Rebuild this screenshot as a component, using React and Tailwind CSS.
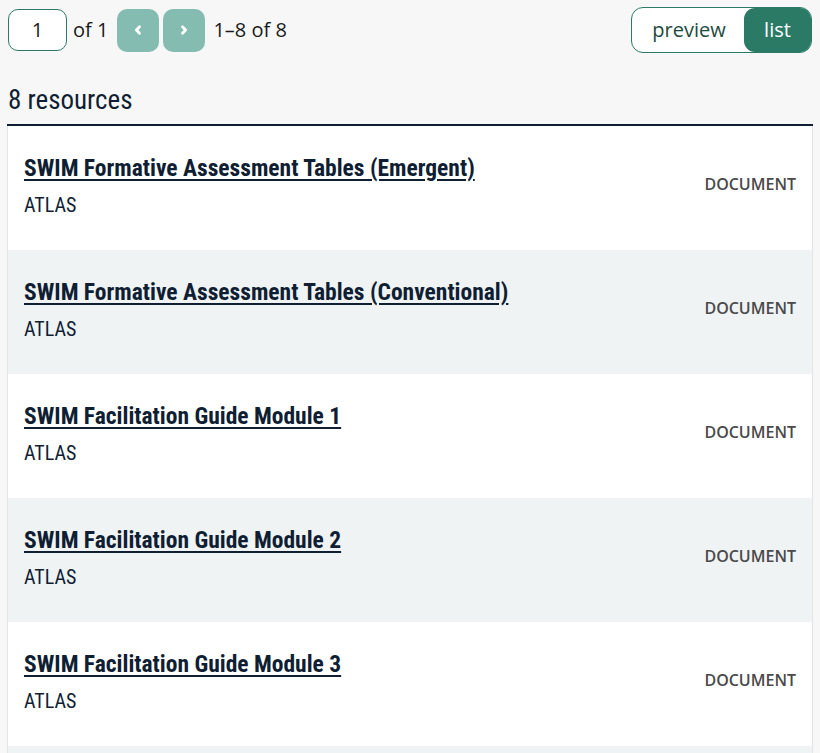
const resources = [
  "SWIM Formative Assessment Tables (Emergent)",
  "SWIM Formative Assessment Tables (Conventional)",
  "SWIM Facilitation Guide Module 1",
  "SWIM Facilitation Guide Module 2",
  "SWIM Facilitation Guide Module 3",
  "SWIM Facilitation Guide Module 4",
  "SWIM Facilitation Guide Module 5",
  "SWIM Facilitation Guide Module 6",
];

const condensed = {
  fontFamily: '"Liberation Sans Narrow", "Roboto Condensed", "DejaVu Sans Condensed", Roboto, sans-serif',
};

const App = () => {
  return (
    <div className="min-h-screen bg-[#f7f7f7] font-['Open_Sans',sans-serif] text-[#1a1a1a]">
      <div className="flex items-center justify-between pl-2 pr-2 pt-[7px]">
        <div className="flex items-center">
          <div className="flex h-[42px] w-[59px] items-center justify-center rounded-[10px] border border-[#2a7a66] bg-white text-[20px]">
            1
          </div>
          <span className="ml-[6px] text-[20px]">of 1</span>
          <div className="ml-[9px] flex gap-1">
            <button className="flex h-[43px] w-[42px] items-center justify-center rounded-[10px] bg-[#84bcb1] text-white">
              <svg width="14" height="14" viewBox="0 0 12 12" fill="none" stroke="currentColor" strokeWidth="2.4" strokeLinecap="round" strokeLinejoin="round">
                <path d="M7.3 3.2 L4.6 6 L7.3 8.8" />
              </svg>
            </button>
            <button className="flex h-[43px] w-[42px] items-center justify-center rounded-[10px] bg-[#84bcb1] text-white">
              <svg width="14" height="14" viewBox="0 0 12 12" fill="none" stroke="currentColor" strokeWidth="2.4" strokeLinecap="round" strokeLinejoin="round">
                <path d="M4.7 3.2 L7.4 6 L4.7 8.8" />
              </svg>
            </button>
          </div>
          <span className="ml-[8px] text-[20px]">1–8 of 8</span>
        </div>
        <div className="flex h-[46px] w-[181px] items-center rounded-[12px] border border-[#2a7a66] bg-white">
          <span className="flex-1 pl-[2px] text-center text-[20px] text-[#1d4a3e]">preview</span>
          <span className="flex h-full w-[67px] items-center justify-center rounded-[11px] bg-[#2a7a66] text-[20px] text-white">
            list
          </span>
        </div>
      </div>

      <h2 style={condensed} className="mt-[31px] pl-2 text-[27px] leading-[32px] text-[#0f1e33]">
        8 resources
      </h2>

      <div className="mx-[7px] mt-[8px] border-t-2 border-[#0f1e33]">
        {resources.map((title, i) => (
          <div
            key={title}
            className={`flex h-[124px] items-center justify-between border-x border-[#e2e4e6] pl-4 pr-4 ${
              i % 2 === 0 ? "bg-white" : "bg-[#f0f3f4]"
            }`}
          >
            <div style={condensed} className="-mt-[6px]">
              <a href="#" className="text-[23.5px] font-bold leading-[28px] text-[#0f1e33] underline decoration-2 underline-offset-[3px]">
                {title}
              </a>
              <div className="mt-[10px] text-[20px] leading-[24px] text-[#0f1e33]">ATLAS</div>
            </div>
            <span className="-mt-2 text-[16px] font-semibold text-[#4a4a4a]">DOCUMENT</span>
          </div>
        ))}
      </div>
    </div>
  );
};

export default App;
